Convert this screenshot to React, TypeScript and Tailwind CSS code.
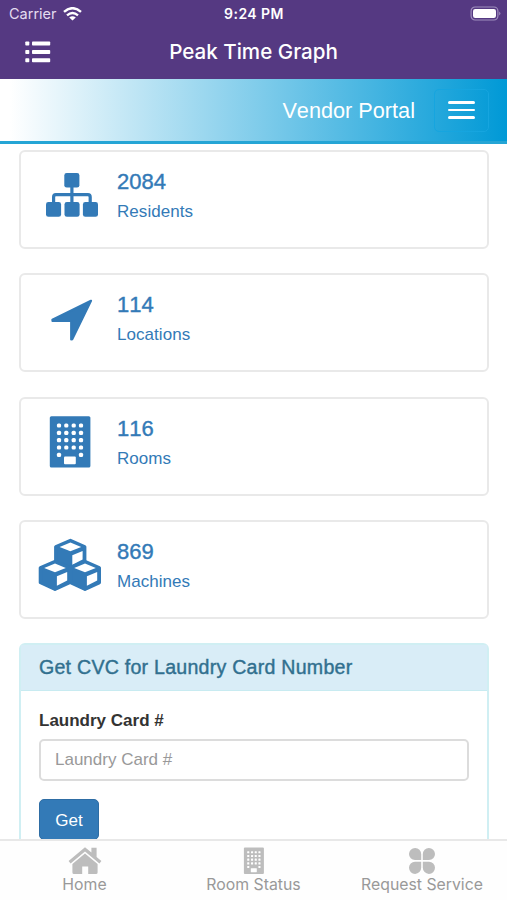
import React from 'react';

interface StatCardProps {
  value: string;
  label: string;
  icon: React.ReactNode;
}

const ResidentsIcon = () => (
  <svg className="w-16 h-14 text-[#337ab7]" viewBox="0 0 64 56" fill="currentColor">
    <rect x="26.3" y="5" width="15.1" height="14.6" rx="2.4" />
    <rect x="8" y="34" width="15.1" height="14.8" rx="2.4" />
    <rect x="26.5" y="34" width="15.1" height="14.8" rx="2.4" />
    <rect x="44.9" y="34" width="15.1" height="14.8" rx="2.4" />
    <path
      d="M33.9 18v18M15.6 36v-7q0-2.3 2.3-2.3h32q2.3 0 2.3 2.3v7"
      fill="none"
      stroke="currentColor"
      strokeWidth="3.2"
    />
  </svg>
);

const LocationIcon = () => (
  <svg className="w-16 h-14 text-[#337ab7]" viewBox="0 0 64 56" fill="currentColor">
    <path
      d="M53 9.8 14.4 28.8 14.6 30H33.2V48.4L34.2 48.2Z"
      stroke="currentColor"
      strokeWidth="2.2"
      strokeLinejoin="round"
    />
  </svg>
);

const BuildingIcon = () => (
  <svg className="w-16 h-14" viewBox="0 0 64 56">
    <rect x="11.8" y="1.2" width="40.6" height="51.4" rx="1.6" fill="#337ab7" />
    {[10.5, 17.8, 25.2, 32.5, 39.8].map((y, row) =>
      [21, 28.3, 35.7, 43]
        .filter((_, col) => row < 4 || col === 0 || col === 3)
        .map((x) => (
          <rect key={`${x}-${y}`} x={x - 2.1} y={y - 2.1} width="4.2" height="4.2" rx="1.5" fill="#fff" />
        ))
    )}
    <rect x="26" y="41.6" width="11.8" height="7.6" rx="1" fill="#fff" />
  </svg>
);

const cubes = [
  { x: 15.4, y: 0 },
  { x: 0, y: 21 },
  { x: 30, y: 21 },
];

const CubesIcon = () => (
  <svg className="w-16 h-14" viewBox="0 0 64 56">
    {cubes.map(({ x, y }) => (
      <g key={`${x}-${y}`} transform={`translate(${x} ${y})`}>
        <path
          d="M17 2.6 31.2 8.8V23.6L17 30.2 2.5 23.4V8.8Z"
          fill="#337ab7"
          stroke="#337ab7"
          strokeWidth="3.6"
          strokeLinejoin="round"
        />
        <path d="M17 4.5 27.8 8.9 17 13.2 6.2 8.9Z" fill="#fff" />
        <path d="M18.9 17.2 29.2 13V21.6L18.9 26.8Z" fill="#fff" />
      </g>
    ))}
  </svg>
);

const StatCard: React.FC<StatCardProps> = ({ value, label, icon }) => (
  <div className="flex h-[99px] gap-[15px] rounded-[6px] border-2 border-[#e9e9e9] bg-white pl-[17px] pt-4">
    {icon}
    <div className="-mt-px flex flex-col text-[#337ab7]">
      <div className="text-[22px] leading-[30px] [font-kerning:none] [-webkit-text-stroke:0.4px]">{value}</div>
      <div className="text-[17px] leading-[29px] tracking-[0.05px]">{label}</div>
    </div>
  </div>
);

const StatusBar = () => (
  <div className="flex h-[27px] items-center justify-between pl-[9px] pr-[6px] text-white">
    <div className="flex w-[150px] items-center gap-[6px]">
      <span className="text-[14.5px] leading-5 text-[#e4dcf0]">Carrier</span>
      <svg className="h-[14px] w-[19px]" viewBox="0 0 19 14" fill="none" stroke="currentColor" strokeWidth="2.4">
        <path d="M1 4.8Q9.5-2.5 18 4.8M4 8.3q5.5-4.6 11 0" />
        <path d="M9.5 13.6 6.2 10.4q3.3-2.5 6.6 0Z" fill="currentColor" stroke="none" />
      </svg>
    </div>
    <span className="text-[14px] font-semibold leading-5 tracking-[0.45px]">9:24 PM</span>
    <div className="flex w-[152px] justify-end">
      <svg className="h-[15px] w-[31px]" viewBox="0 0 31 15">
        <rect x="1.1" y="1" width="26.8" height="13" rx="4" fill="none" stroke="#a08fbe" strokeWidth="1.2" />
        <rect x="3" y="3" width="23" height="9" rx="2.2" fill="#fff" />
        <path d="M29.2 5.4q2.4 2.1 0 4.2Z" fill="#a08fbe" />
      </svg>
    </div>
  </div>
);

const NavBar = () => (
  <div className="grid h-[50px] grid-cols-[80px_1fr_80px] items-center text-white">
    <svg className="ml-[25px] h-[22px] w-[26px]" viewBox="0 0 26 22" fill="currentColor">
      {[0.5, 9, 17.3].map((y) => (
        <g key={y}>
          <rect x="0.3" y={y} width="4" height="4" rx="0.8" />
          <rect x="7" y={y} width="18.2" height="4" rx="0.8" />
        </g>
      ))}
    </svg>
    <h1 className="text-center text-[20.6px] font-medium leading-6">Peak Time Graph</h1>
  </div>
);

const HomeIcon = () => (
  <svg className="h-[28px] w-[34px]" viewBox="0 0 34 28" fill="#bdbdbd">
    <path d="M17 .2 23.4 5.4V.8H28.6V9.9L33.4 14 31.4 16.4 17 4.4 2.6 16.4.6 14Z" />
    <path d="M17 6.4 29.6 17V25.4Q29.6 27 28 27H20.2V19.4H14.2V27H6Q4.4 27 4.4 25.4V17Z" />
  </svg>
);

const RoomStatusIcon = () => (
  <svg className="h-[28px] w-[22px]" viewBox="0 0 22 28">
    <rect x="0.9" y="0.6" width="20" height="26.4" rx="1" fill="#bdbdbd" />
    {[5.2, 8.9, 12.6, 16.3, 20].map((y, row) =>
      [5.2, 9, 12.7, 16.4]
        .filter((_, col) => row < 4 || col === 0 || col === 3)
        .map((x) => <rect key={`${x}-${y}`} x={x - 1} y={y - 1} width="2.1" height="2.1" rx="0.5" fill="#fff" />)
    )}
    <rect x="7.8" y="21.2" width="6" height="4" rx="0.4" fill="#fff" />
  </svg>
);

const CloverIcon = () => (
  <svg className="h-[28px] w-[28px]" viewBox="0 0 28 28" fill="#bdbdbd">
    <path d="M13.2 13.1H7A6.1 6.1 0 1 1 13.2 7Z" />
    <path d="M14.8 13.1H21A6.1 6.1 0 1 0 14.8 7Z" />
    <path d="M13.2 14.7H7A6.1 6.1 0 1 0 13.2 20.8Z" />
    <path d="M14.8 14.7H21A6.1 6.1 0 1 1 14.8 20.8Z" />
  </svg>
);

const tabs = [
  { label: 'Home', icon: <HomeIcon /> },
  { label: 'Room Status', icon: <RoomStatusIcon /> },
  { label: 'Request Service', icon: <CloverIcon /> },
];

const App: React.FC = () => {
  return (
    <div className="flex h-[900px] w-[507px] flex-col overflow-hidden bg-white font-['Liberation_Sans',Arial,sans-serif]">
      <header className="h-[79px] shrink-0 bg-[#553982] font-[Inter,sans-serif]">
        <StatusBar />
        <NavBar />
      </header>

      {/* Portal banner */}
      <div className="flex h-[65px] shrink-0 items-center justify-end gap-[19px] border-b-[3px] border-[#25a5d5] bg-[linear-gradient(90deg,#fff_0%,#fff_2%,#0099d6_100%)] pr-[18px] text-white">
        <span className="mt-0.5 text-[21.7px] leading-7 [font-kerning:none]">Vendor Portal</span>
        <button className="flex h-[43px] w-[55px] flex-col items-center justify-center gap-[5px] rounded-[5px] border border-[#16a5df]">
          <span className="h-[2.5px] w-[27px] rounded-full bg-white" />
          <span className="h-[2.5px] w-[27px] rounded-full bg-white" />
          <span className="h-[2.5px] w-[27px] rounded-full bg-white" />
        </button>
      </div>

      <main className="flex min-h-0 flex-1 flex-col gap-[24.4px] overflow-hidden pl-[19px] pr-[18px] pt-[5.8px] *:shrink-0">
        <StatCard value="2084" label="Residents" icon={<ResidentsIcon />} />
        <StatCard value="114" label="Locations" icon={<LocationIcon />} />
        <StatCard value="116" label="Rooms" icon={<BuildingIcon />} />
        <StatCard value="869" label="Machines" icon={<CubesIcon />} />

        {/* CVC lookup */}
        <section className="h-[260px] rounded-[6px] border-2 border-[#d0eff3] bg-white">
          <h3 className="h-[46px] border-b border-[#c8ebf1] bg-[#d9edf7] pl-[18px] text-[19.6px] leading-[44px] tracking-[0.24px] text-[#31708f] [-webkit-text-stroke:0.4px]">
            Get CVC for Laundry Card Number
          </h3>
          <div className="px-[18px] pt-[18px]">
            <label className="block text-[17px] font-bold leading-6 text-[#333]">Laundry Card #</label>
            <input
              className="mt-[6px] block h-[42px] w-full rounded-[5px] border-2 border-[#dcdcdc] px-[14px] text-[17px] placeholder:text-[#999]"
              placeholder="Laundry Card #"
            />
            <button className="mt-[18px] block h-[41px] w-[60px] rounded-[5px] border border-[#2e6da4] bg-[#337ab7] pt-px text-[17px] text-white">
              Get
            </button>
          </div>
        </section>
      </main>

      <nav className="grid h-[61px] shrink-0 grid-cols-[169px_169px_168px] border-t-2 border-[#e8e8e8] bg-[#fefefe] pt-[6px] font-[Inter,sans-serif]">
        {tabs.map((tab) => (
          <div key={tab.label} className="flex flex-col items-center text-[15.8px] leading-5 text-[#999]">
            {tab.icon}
            <span>{tab.label}</span>
          </div>
        ))}
      </nav>
    </div>
  );
};

export default App;
